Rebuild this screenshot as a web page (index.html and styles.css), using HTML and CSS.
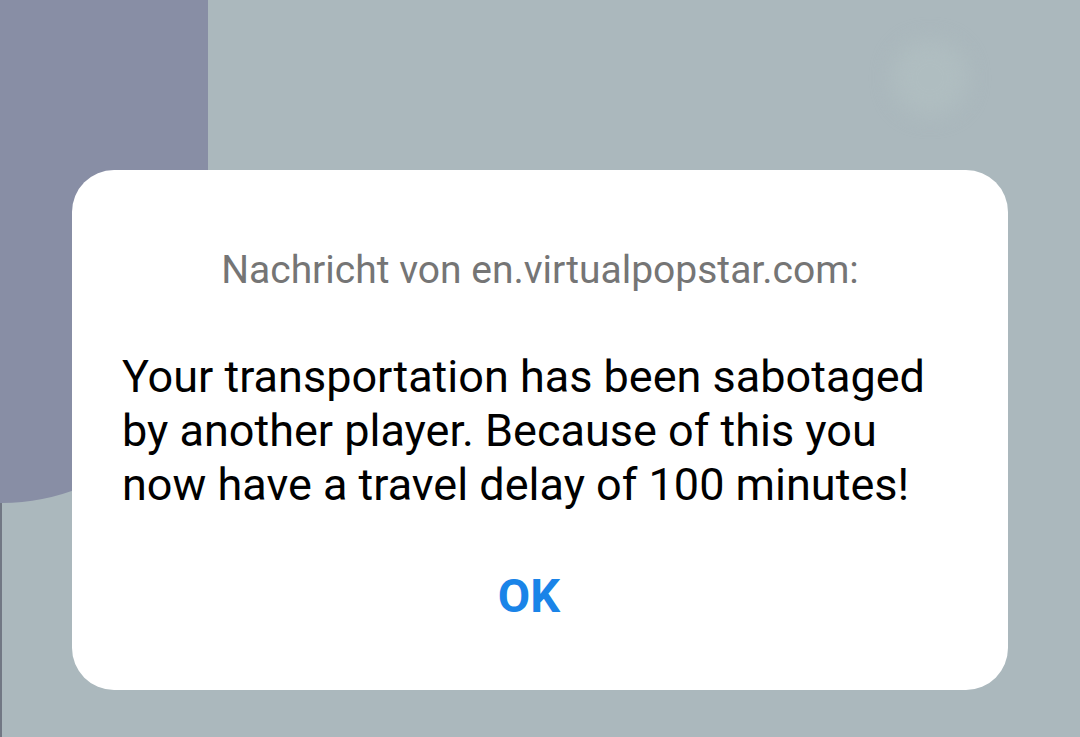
FILE: index.html
```html
<!DOCTYPE html>
<html lang="de">
<head>
    <meta charset="UTF-8">
    <meta name="viewport" content="width=device-width, initial-scale=1.0">
    <title>Nachricht</title>
    <link rel="stylesheet" href="styles.css">
</head>
<body>

    <!-- Blurred page behind the dialog -->
    <div class="backdrop">
        <div class="blob"></div>
        <div class="glow"></div>
    </div>

    <!-- Alert dialog -->
    <div class="dialog">
        <div class="dialog-title">Nachricht von en.virtualpopstar.com:</div>
        <div class="dialog-message">
            Your transportation has been sabotaged by another player. Because of this you now have a travel delay of 100 minutes!
        </div>
        <div class="dialog-actions">
            <button class="dialog-button">OK</button>
        </div>
    </div>

</body>
</html>
```

FILE: styles.css
```css
body {
    margin: 0;
    height: 737px;
    overflow: hidden;
    background: #abb8bd;
    font-family: Roboto, "Noto Sans", sans-serif;
    position: relative;
    padding-top: 170px;
    box-sizing: border-box;
}

.backdrop {
    position: absolute;
    inset: 0;
    border-left: 2px solid #717784;
}

.blob {
    position: absolute;
    left: -100px;
    top: -50px;
    width: 306px;
    height: 553px;
    background: #888ea5;
    border-bottom-right-radius: 206px 203px;
}

.glow {
    position: absolute;
    left: 890px;
    top: 40px;
    width: 76px;
    height: 76px;
    border-radius: 50%;
    background: #afbdc0;
    filter: blur(10px);
}

.dialog {
    position: relative;
    margin-left: 72px;
    width: 936px;
    height: 520px;
    background: #fff;
    border-radius: 42px;
    box-sizing: border-box;
    padding: 76px 60px 0 50px;
}

.dialog-title {
    text-align: center;
    font-size: 39px;
    color: #757575;
    line-height: 48px;
    margin-left: 10px;
}

.dialog-message {
    margin-top: 56px;
    font-size: 45px;
    line-height: 54px;
    color: #000;
}

.dialog-actions {
    display: flex;
    justify-content: center;
    margin-top: 56px;
}

.dialog-button {
    border: 0;
    background: none;
    padding: 0;
    font-family: inherit;
    font-size: 47px;
    font-weight: bold;
    color: #1a84e8;
    line-height: 56px;
    margin-right: 12px;
}
```
